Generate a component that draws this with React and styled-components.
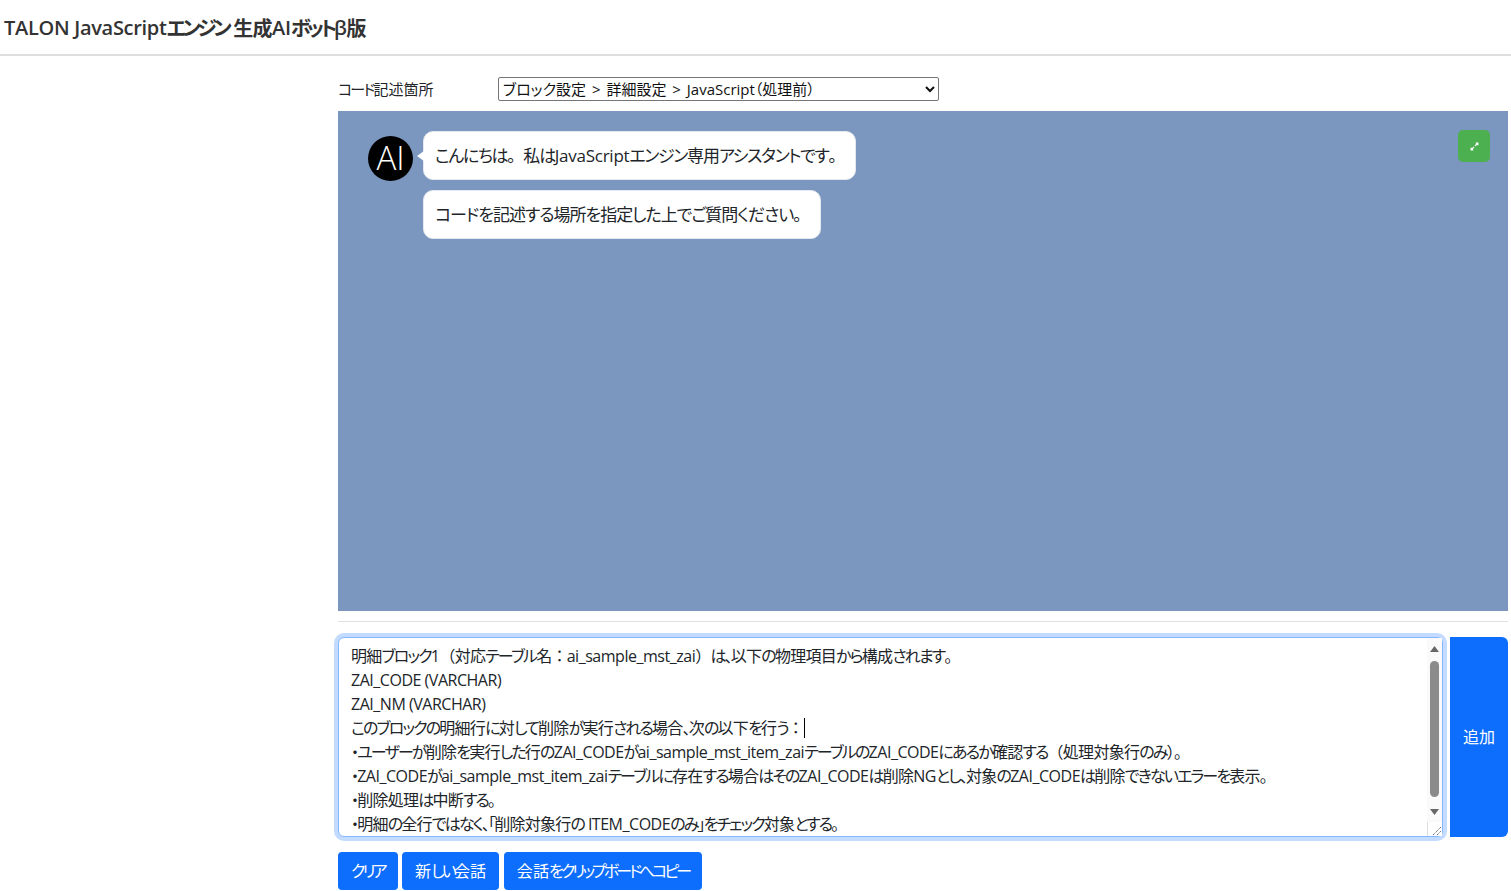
import React from 'react';
import styled, { createGlobalStyle } from 'styled-components';
import { FaExpandAlt } from 'react-icons/fa';

const FONT = `"Open Sans", "Noto Sans CJK JP", sans-serif`;

const LINES = [
  '明細ブロック1（対応テーブル名：ai_sample_mst_zai）は、以下の物理項目から構成されます。',
  'ZAI_CODE (VARCHAR)',
  'ZAI_NM (VARCHAR)',
  'このブロックの明細行に対して削除が実行される場合、次の以下を行う：',
  '・ユーザーが削除を実行した行のZAI_CODEがai_sample_mst_item_zaiテーブルのZAI_CODEにあるか確認する（処理対象行のみ）。',
  '・ZAI_CODEがai_sample_mst_item_zaiテーブルに存在する場合はそのZAI_CODEは削除NGとし、対象のZAI_CODEは削除できないエラーを表示。',
  '・削除処理は中断する。',
  '・明細の全行ではなく、「削除対象行の ITEM_CODEのみ」をチェック対象とする。',
];

const svgUrl = (body) =>
  `url("data:image/svg+xml,${encodeURIComponent(
    `<svg xmlns='http://www.w3.org/2000/svg' width='15' height='15'>${body}</svg>`,
  )}")`;

const GlobalStyle = createGlobalStyle`
  * {
    box-sizing: border-box;
  }
  body {
    margin: 0;
    background: #fff;
    color: #212529;
    font-family: ${FONT};
    font-feature-settings: "palt";
  }
`;

// each run type is tracked on its own, the containers set how tight through the vars
const TRACK = {
  latin: 'var(--latin-track, -0.015em)',
  wide: 'var(--kanji-track, -0.06em)',
  kanji: 'var(--kanji-track, -0.06em)',
  kana: 'var(--kana-track, -0.06em)',
};

const Run = styled.span`
  letter-spacing: ${(p) => TRACK[p.$kind]};
  font-feature-settings: ${(p) => (p.$kind === 'wide' ? 'normal' : '"palt"')};
`;

const RUN_PATTERN = /[\x00-\x7Fβ]+|[（）：。]+|[\u3041-\u30ff、「」・]+|[^\x00-\x7Fβ（）：。\u3041-\u30ff、「」・]+/g;

const kindOf = (part) => {
  if (/^[\x00-\x7Fβ]/.test(part)) return 'latin';
  if (/^[（）：。]/.test(part)) return 'wide';
  if (/^[\u3041-\u30ff、「」・]/.test(part)) return 'kana';
  return 'kanji';
};

const Jp = ({ children }) =>
  children.match(RUN_PATTERN).map((part, idx) => (
    <Run key={idx} $kind={kindOf(part)}>
      {part}
    </Run>
  ));

const Header = styled.header`
  --kana-track: -0.17em;
  --kanji-track: -0.03em;
  height: 56px;
  padding: 0 4px;
  display: flex;
  align-items: center;
  border-bottom: 2px solid #dedede;
  font-size: 20px;
  font-weight: 600;
  color: #333;
  white-space: pre;
`;

const Main = styled.main`
  margin: 0 3px 0 338px;
  padding-top: 21px;
`;

const TargetRow = styled.div`
  display: flex;
  align-items: center;
  height: 24px;
  margin-bottom: 10px;
`;

const TargetLabel = styled.label`
  --kana-track: -0.12em;
  --kanji-track: 0;
  width: 160px;
  padding-bottom: 2px;
  font-size: 15px;
`;

const TargetSelect = styled.select`
  width: 441px;
  height: 24px;
  padding: 0;
  border: 1px solid #767676;
  border-radius: 2px;
  background: #fff;
  color: #111;
  font-family: ${FONT};
  font-feature-settings: "palt";
  font-size: 15px;
  word-spacing: 2px;
`;

const ChatPanel = styled.section`
  position: relative;
  height: 500px;
  padding: 20px 30px;
  display: flex;
  background: #7b96bf;
`;

const Avatar = styled.div`
  flex: none;
  width: 45px;
  height: 45px;
  margin: 5px 10px 0 0;
  padding-bottom: 2px;
  display: flex;
  align-items: center;
  justify-content: center;
  border-radius: 50%;
  background: #000;
  color: #fff;
  font-size: 33px;
  font-weight: 300;
`;

const Bubbles = styled.div`
  display: flex;
  flex-direction: column;
  align-items: flex-start;
  gap: 10px;
`;

const Bubble = styled.div`
  position: relative;
  height: 49px;
  padding: 0 11px 3px;
  display: flex;
  align-items: center;
  border: 1px solid #e4e8ef;
  border-radius: 10px;
  background: #fff;
  font-size: 17px;
  color: #212529;
  white-space: pre;

  ${(p) =>
    p.$tail &&
    `
    --kana-track: -0.08em;

    &::before {
      content: "";
      position: absolute;
      left: -7px;
      top: 19px;
      border-style: solid;
      border-width: 5px 7px 5px 0;
      border-color: transparent #fff transparent transparent;
    }
  `}
`;

const ExpandButton = styled.button`
  position: absolute;
  top: 19px;
  right: 18px;
  width: 32px;
  height: 32px;
  padding: 0;
  display: flex;
  align-items: center;
  justify-content: center;
  border: 0;
  border-radius: 5px;
  background: #4caf50;
  color: #fff;
`;

const Divider = styled.hr`
  height: 1px;
  margin: 10px 0 15px;
  border: 0;
  background: #dfe0e1;
`;

const InputRow = styled.div`
  display: flex;
  height: 200px;
  gap: 7px;
`;

const PromptBox = styled.div`
  position: relative;
  width: 1105px;
  height: 200px;
`;

const PromptInput = styled.div`
  --latin-track: -0.03em;
  --kana-track: -0.116em;
  --kanji-track: -0.045em;
  width: 100%;
  height: 100%;
  padding: 6px 12px;
  border: 1px solid #86b7fe;
  border-radius: 6px;
  outline: 0;
  box-shadow: 0 0 0 4px rgba(13, 110, 253, 0.25);
  background: #fff;
  color: #212529;
  font-size: 16px;
  line-height: 24px;
  white-space: pre;
  resize: vertical;
  overflow: hidden;

  &::-webkit-resizer {
    background: #fff ${svgUrl(
      "<path d='M0.5 15 V0.5 H15' fill='none' stroke='#ddd'/><path d='M6 14 L14 6 M10 14 L14 10' stroke='#666' stroke-width='1' stroke-dasharray='1.4 .6'/>",
    )} no-repeat;
  }
`;

const PromptLine = styled.div`
  height: 24px;
`;

const Caret = styled.span`
  display: inline-block;
  width: 1px;
  height: 20px;
  margin-left: 1px;
  vertical-align: -4px;
  background: #000;
`;

const ScrollTrack = styled.div`
  position: absolute;
  top: 1px;
  right: 1px;
  bottom: 15px;
  width: 15px;
  display: flex;
  flex-direction: column;
  align-items: center;
  background: #fafafa;
`;

const ScrollArrow = styled.svg`
  flex: none;
  width: 15px;
  height: 15px;
  fill: #666;
`;

const ScrollThumb = styled.div`
  flex: 1;
  width: 9px;
  margin: 8px 0 10px;
  border-radius: 5px;
  background: #8b8b8b;
`;

const AddButton = styled.button`
  flex: 1;
  padding: 0 0 2px;
  border: 0;
  border-radius: 0 6px 6px 0;
  background: #0d6efd;
  color: #fff;
  font-family: ${FONT};
  font-size: 16px;
`;

const ActionRow = styled.div`
  display: flex;
  gap: 4.5px;
  margin-top: 15px;
`;

const ActionButton = styled.button`
  --kana-track: -0.185em;
  --kanji-track: 0.01em;
  height: 38px;
  padding: 0 13px 2px;
  border: 0;
  border-radius: 4px;
  background: #0d6efd;
  color: #fff;
  font-family: ${FONT};
  font-size: 16px;
  white-space: pre;
`;

export default function App() {
  return (
    <>
      <GlobalStyle />
      <Header>
        <Jp>TALON JavaScriptエンジン 生成AIボットβ版</Jp>
      </Header>
      <Main>
        <TargetRow>
          <TargetLabel>
            <Jp>コード記述箇所</Jp>
          </TargetLabel>
          <TargetSelect defaultValue="before">
            <option value="before">ブロック設定 &gt; 詳細設定 &gt; JavaScript（処理前）</option>
            <option value="after">ブロック設定 &gt; 詳細設定 &gt; JavaScript（処理後）</option>
          </TargetSelect>
        </TargetRow>
        <ChatPanel>
          <Avatar>AI</Avatar>
          <Bubbles>
            <Bubble $tail>
              <span>
                <Jp>こんにちは。私はJavaScriptエンジン専用アシスタントです。</Jp>
              </span>
            </Bubble>
            <Bubble>
              <span>
                <Jp>コードを記述する場所を指定した上でご質問ください。</Jp>
              </span>
            </Bubble>
          </Bubbles>
          <ExpandButton aria-label="expand">
            <FaExpandAlt size={9} />
          </ExpandButton>
        </ChatPanel>
        <Divider />
        <InputRow>
          <PromptBox>
            <PromptInput role="textbox" contentEditable suppressContentEditableWarning spellCheck={false}>
              {LINES.map((line, idx) => (
                <PromptLine key={idx}>
                  <Jp>{line}</Jp>
                  {idx === 3 && <Caret />}
                </PromptLine>
              ))}
            </PromptInput>
            <ScrollTrack>
              <ScrollArrow viewBox="0 0 15 15">
                <path d="M3 14 L7.5 8 L12 14 Z" />
              </ScrollArrow>
              <ScrollThumb />
              <ScrollArrow viewBox="0 0 15 15">
                <path d="M3 2 L7.5 8 L12 2 Z" />
              </ScrollArrow>
            </ScrollTrack>
          </PromptBox>
          <AddButton>追加</AddButton>
        </InputRow>
        <ActionRow>
          <ActionButton>
            <Jp>クリア</Jp>
          </ActionButton>
          <ActionButton>
            <Jp>新しい会話</Jp>
          </ActionButton>
          <ActionButton>
            <Jp>会話をクリップボードへコピー</Jp>
          </ActionButton>
        </ActionRow>
      </Main>
    </>
  );
}
